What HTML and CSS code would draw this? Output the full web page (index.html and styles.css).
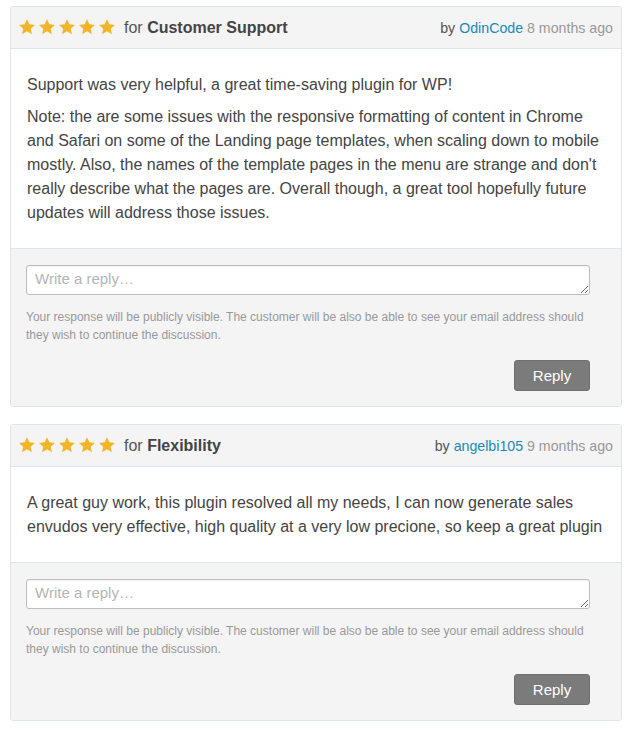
FILE: index.html
```html
<!DOCTYPE html>
<html>
<head>
<meta charset="utf-8">
<link rel="stylesheet" href="styles.css">
</head>
<body>
<div class="list">
  <div class="card">
    <div class="card-head">
      <div class="rating">
        <span class="stars">
          <svg viewBox="0 0 100 20" width="100" height="20"><defs><path id="s" d="M9 1.2l2.35 5.1 5.55.6-4.15 3.75 1.2 5.5L9 13.3l-4.95 2.85 1.2-5.5L1.1 6.9l5.55-.6z"/></defs><use href="#s" x="0"/><use href="#s" x="20"/><use href="#s" x="40"/><use href="#s" x="60"/><use href="#s" x="80"/></svg>
        </span>
        <span class="for">for <b>Customer Support</b></span>
      </div>
      <div class="meta">by <a class="author" href="#">OdinCode</a> <span class="ago">8 months ago</span></div>
    </div>
    <div class="card-body">
      <p>Support was very helpful, a great time-saving plugin for WP!</p>
      <p>Note: the are some issues with the responsive formatting of content in Chrome and Safari on some of the Landing page templates, when scaling down to mobile mostly. Also, the names of the template pages in the menu are strange and don't really describe what the pages are. Overall though, a great tool hopefully future updates will address those issues.</p>
    </div>
    <div class="reply">
      <textarea class="reply-input" placeholder="Write a reply…"></textarea>
      <p class="notice">Your response will be publicly visible. The customer will be also be able to see your email address should they wish to continue the discussion.</p>
      <div class="actions"><button class="btn">Reply</button></div>
    </div>
  </div>

  <div class="card">
    <div class="card-head">
      <div class="rating">
        <span class="stars">
          <svg viewBox="0 0 100 20" width="100" height="20"><defs><path id="s2" d="M9 1.2l2.35 5.1 5.55.6-4.15 3.75 1.2 5.5L9 13.3l-4.95 2.85 1.2-5.5L1.1 6.9l5.55-.6z"/></defs><use href="#s2" x="0"/><use href="#s2" x="20"/><use href="#s2" x="40"/><use href="#s2" x="60"/><use href="#s2" x="80"/></svg>
        </span>
        <span class="for">for <b>Flexibility</b></span>
      </div>
      <div class="meta">by <a class="author" href="#">angelbi105</a> <span class="ago">9 months ago</span></div>
    </div>
    <div class="card-body">
      <p>A great guy work, this plugin resolved all my needs, I can now generate sales envudos very effective, high quality at a very low precione, so keep a great plugin</p>
    </div>
    <div class="reply">
      <textarea class="reply-input" placeholder="Write a reply…"></textarea>
      <p class="notice">Your response will be publicly visible. The customer will be also be able to see your email address should they wish to continue the discussion.</p>
      <div class="actions"><button class="btn">Reply</button></div>
    </div>
  </div>
</div>
</body>
</html>
```

FILE: styles.css
```css
* { box-sizing: border-box; }
html, body { margin: 0; padding: 0; background: #fff; }
body {
  font-family: "Liberation Sans", Arial, Helvetica, sans-serif;
  color: #444;
}
.list {
  padding: 6px 8px 0 10px;
  display: flex;
  flex-direction: column;
  gap: 17px;
}
.card {
  border: 1px solid #dfe5eb;
  border-radius: 3px;
  overflow: hidden;
  background: #fff;
}
.card-head {
  height: 42px;
  background: #f4f4f4;
  border-bottom: 1px solid #dfe5eb;
  display: flex;
  align-items: center;
  justify-content: space-between;
  padding: 0 8px 0 7px;
}
.rating { display: flex; align-items: center; }
.stars { display: flex; width: 106px; }
.stars svg { fill: #f2b526; display: block; }
.for { font-size: 16px; color: #555; }
.for b { color: #444; font-weight: bold; }
.meta { font-size: 14.2px; color: #555; }
.author { color: #1b8ab8; text-decoration: none; }
.ago { color: #999; }
.card-body {
  padding: 24px 16px 23px;
  font-size: 16px;
  line-height: 24px;
  color: #444;
}
.card-body p { margin: 0 0 8px; }
.card-body p:last-child { margin-bottom: 0; }
.reply {
  background: #f4f4f4;
  border-top: 1px solid #dfe5eb;
  padding: 16px 31px 15px 15px;
}
.reply-input {
  display: block;
  width: 100%;
  height: 30px;
  border: 1px solid #bdbdbd;
  border-radius: 3px;
  background: #fff;
  font-family: "Liberation Sans", Arial, sans-serif;
  font-size: 15px;
  padding: 4px 8px;
  resize: vertical;
  box-shadow: inset 0 1px 1px rgba(0,0,0,0.05);
}
.reply-input::placeholder { color: #b5b5b5; }
.notice {
  margin: 13px 0 0;
  font-size: 12px;
  line-height: 18px;
  color: #999;
}
.actions {
  display: flex;
  justify-content: flex-end;
  margin-top: 16px;
}
.btn {
  width: 76px;
  height: 31px;
  background: #7b7b7b;
  color: #fff;
  border: 1px solid #6f6f6f;
  border-radius: 3px;
  font-family: "Liberation Sans", Arial, sans-serif;
  font-size: 15px;
  padding: 0;
}
```
